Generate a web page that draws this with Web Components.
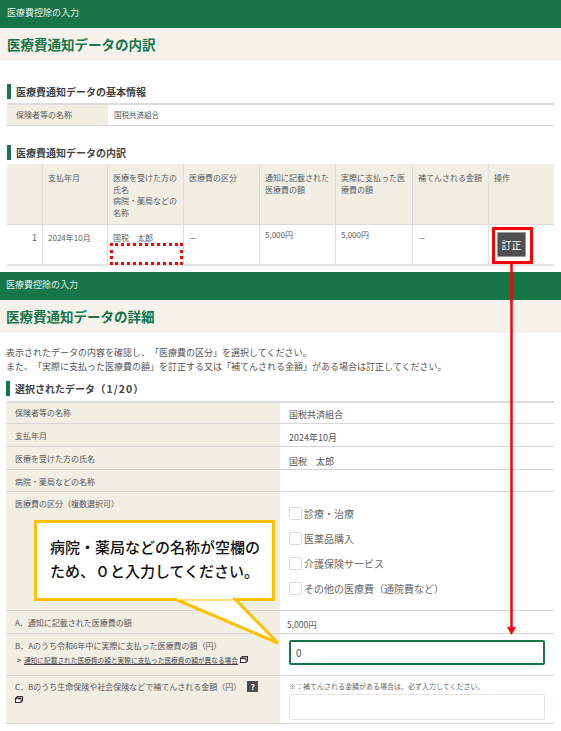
<!DOCTYPE html>
<html lang="ja">
<head>
<meta charset="UTF-8">
<title>医療費通知データ</title>
<style>
  html, body { margin: 0; background: #fff; }
  body { font-family: "Noto Sans CJK JP", "Noto Sans", sans-serif; color: #555; text-spacing-trim: space-all; }
</style>
</head>
<body>

<template id="page-band-template">
  <style>
    :host { display: block; }
    .bar { height: 28px; background: #17754a; color: #e4efe9; font-size: 9px; line-height: 26px; padding-left: var(--inset, 7px); }
    .title { height: 33px; background: #f5f2ec; color: #17754a; font-size: 13.5px; font-weight: 700; line-height: 32px; padding-left: var(--inset, 7px); }
  </style>
  <div class="bar"><slot name="bar"></slot></div>
  <div class="title"><slot name="title"></slot></div>
</template>

<template id="section-head-template">
  <style>
    :host { display: block; border-left: 4px solid #17754a; height: 15px; padding-left: 5px; font-size: 10px; font-weight: 700; line-height: 15px; color: #444; }
  </style>
  <slot></slot>
</template>

<template id="info-row-template">
  <style>
    :host { display: grid; grid-template-columns: var(--label, 274px) 1fr; border-bottom: 1px solid #d6d6d6; min-height: var(--h, 22px); }
    :host([first]) { border-top: 2px solid #dcdcdc; }
    .label { background: #f1eee4; font-size: 8px; padding: var(--label-top, 5px) 0 0 9px; line-height: 13px; color: #555; }
    .value { font-size: var(--value-size, 9px); padding: var(--value-pad, 6px 0 0 9px); line-height: 13px; color: #555; }
  </style>
  <div class="label"><slot name="label"></slot></div>
  <div class="value"><slot></slot></div>
</template>

<template id="list-table-template">
  <style>
    :host { display: block; margin-left: 7px; width: 547px; }
    .row { display: grid; grid-template-columns: 36px 65px 76px 76px 76px 77px 76px 65px; }
    .head { background: #f1eee4; height: 61px; border-bottom: 1px solid #dedbd2; box-sizing: border-box; }
    .body { height: 41px; border-bottom: 2px solid #e4e4e4; box-sizing: border-box; }
    .row > div { border-right: 1px solid #dedede; font-size: 8px; line-height: 11.7px; padding: 8px 0 0 5px; color: #5a5a5a; box-sizing: border-box; }
    .row > div:last-child { border-right: 0; }
    .body > div { padding-top: 7px; }
    .body > .amount { padding-top: 4px; }
    .num { text-align: right; padding-right: 5px !important; font-size: 9px !important; }
    button { display: block; margin: 0 0 0 6px; width: 29px; height: 25px; padding: 0; border: 1px solid #999; background: #505050; color: #fff; font: 10px/20px "Noto Sans CJK JP", sans-serif; }
  </style>
  <div class="row head">
    <div></div>
    <div>支払年月</div>
    <div>医療を受けた方の氏名<br>病院・薬局などの名称</div>
    <div>医療費の区分</div>
    <div>通知に記載された医療費の額</div>
    <div>実際に支払った医療費の額</div>
    <div>補てんされる金額</div>
    <div>操作</div>
  </div>
  <div class="row body">
    <div class="num">1</div>
    <div>2024年10月</div>
    <div>国税　太郎</div>
    <div>－</div>
    <div class="amount">5,000円</div>
    <div class="amount">5,000円</div>
    <div>－</div>
    <div style="padding-left:2px"><button>訂正</button></div>
  </div>
</template>

<template id="check-item-template">
  <style>
    :host { display: flex; align-items: center; gap: 2px; height: 25px; font-size: 10px; color: #666; }
    i { width: 11px; height: 11px; border: 1px solid #dedbd4; border-radius: 2px; background: #fff; }
  </style>
  <i></i><slot></slot>
</template>

<template id="link-icon-template">
  <style>
    :host { display: inline-block; width: 8px; height: 7px; vertical-align: 0; }
    svg { display: block; }
  </style>
  <svg width="8" height="7" viewBox="0 0 8 7"><rect x="2" y=".5" width="5.5" height="4.5" fill="#fff" stroke="#333"/><rect x=".5" y="2" width="5.5" height="4.5" fill="#fff" stroke="#333"/><rect x="1" y="2" width="5" height="1.2" fill="#333"/></svg>
</template>

<template id="amount-field-template">
  <style>
    :host { display: block; box-sizing: border-box; width: 256px; height: 26px; border: 1px solid #e8e4dc; border-radius: 2px; background: #fff; font-size: 10px; line-height: 24px; padding-left: 5px; color: #555; }
    :host([active]) { border: 2px solid #17754a; height: 25px; line-height: 21px; }
  </style>
  <slot></slot>
</template>

<template id="call-out-template">
  <style>
    :host { position: absolute; left: 34px; top: 520px; width: 241px; height: 81px; box-sizing: border-box; border: 3px solid #ffc000; background: #fff; padding: 12px 0 0 13px; font-size: 15px; font-weight: 500; line-height: 24px; color: #111; letter-spacing: 0; }
    svg { position: absolute; left: -37px; top: -523px; overflow: visible; pointer-events: none; }
    .txt { position: relative; white-space: nowrap; }
  </style>
  <svg width="561" height="731"><polygon points="175,599 278,643 235,599" fill="#fff" stroke="#ffc000" stroke-width="3"/><rect x="177" y="596" width="56" height="3.5" fill="#fff"/></svg>
  <div class="txt"><slot></slot></div>
</template>

<template id="red-marks-template">
  <style>
    :host { position: absolute; inset: 0; pointer-events: none; display: block; }
    .dots { position: absolute; left: 110px; top: 243px; width: 73px; height: 22px; box-sizing: border-box; border: 3px dotted #f00; }
    .box { position: absolute; left: 492px; top: 227px; width: 41px; height: 37px; box-sizing: border-box; border: 3px solid #f00; }
    svg { position: absolute; left: 0; top: 0; }
  </style>
  <div class="dots"></div>
  <div class="box"></div>
  <svg width="561" height="731"><line x1="511.5" y1="264" x2="511.5" y2="628" stroke="#f00" stroke-width="2.5"/><polygon points="507,627 516,627 511.5,635" fill="#f00"/></svg>
</template>

<style>
  .sheet { position: relative; width: 561px; height: 731px; overflow: hidden; }
  .first { height: 272px; }
  .wrap { margin: 0 7px; }
  .wrap2 { margin: 0 7px 0 6px; }
  .para { font-size: 9px; line-height: 14px; color: #555; margin: 13px 0 0 6px; height: 35px; }
  .sub { display: block; font-size: 8px; line-height: 14px; margin-top: 1px; white-space: nowrap; color: #444; }
  .sub b { display: inline-block; width: 7px; margin-left: 2px; font-size: 7px; }
  .sub u { font-size: 6.7px; text-underline-offset: 1px; }
  .q { display: inline-block; width: 11px; height: 11px; background: #4d4d4d; color: #fff; font-size: 8px; font-weight: 700; line-height: 11px; text-align: center; margin-left: 6px; vertical-align: 0; }
  .note { font-size: 7px; line-height: 10px; color: #666; margin: 0 0 3px; }
  .wide { letter-spacing: 1px; font-size: 10.5px; }
</style>

<div class="sheet">
  <div class="first">
    <page-band>
      <span slot="bar">医療費控除の入力</span>
      <span slot="title">医療費通知データの内訳</span>
    </page-band>
    <div class="wrap" style="margin-top:23px">
      <section-head>医療費通知データの基本情報</section-head>
      <info-row first style="--label:101px;--h:20px;--label-top:3px;--value-size:7.5px;--value-pad:3px 0 0 6px;margin-top:4px">
        <span slot="label">保険者等の名称</span>国税共済組合
      </info-row>
    </div>
    <div class="wrap" style="margin-top:19px"><section-head>医療費通知データの内訳</section-head></div>
    <list-table style="margin-top:4px"></list-table>
  </div>

  <page-band style="--inset:6px">
    <span slot="bar">医療費控除の入力</span>
    <span slot="title">医療費通知データの詳細</span>
  </page-band>
  <div class="para">表示されたデータの内容を確認し、「医療費の区分」を選択してください。<br>また、「実際に支払った医療費の額」を訂正する又は「補てんされる金額」がある場合は訂正してください。</div>
  <div class="wrap2">
    <section-head>選択されたデータ<span class="wide">（1/20）</span></section-head>
    <info-row first style="margin-top:5px;--h:20px;--label-top:3px;--value-pad:5px 0 0 9px"><span slot="label">保険者等の名称</span>国税共済組合</info-row>
    <info-row style="--h:22px;--value-pad:7px 0 0 9px"><span slot="label">支払年月</span>2024年10月</info-row>
    <info-row style="--h:22px;--value-pad:8px 0 0 9px"><span slot="label">医療を受けた方の氏名</span>国税　太郎</info-row>
    <info-row style="--h:21px"><span slot="label">病院・薬局などの名称</span></info-row>
    <info-row style="--h:118px;--value-pad:9px 0 0 9px">
      <span slot="label">医療費の区分（複数選択可）</span>
      <check-item>診療・治療</check-item>
      <check-item>医薬品購入</check-item>
      <check-item>介護保険サービス</check-item>
      <check-item>その他の医療費（通院費など）</check-item>
    </info-row>
    <info-row style="--h:22px;--value-size:8.5px;--value-pad:7px 0 0 7px"><span slot="label">A．通知に記載された医療費の額</span>5,000円</info-row>
    <info-row style="--h:41px;--value-pad:6px 0 0 9px">
      <span slot="label">B．Aのうち令和6年中に実際に支払った医療費の額（円）<span class="sub"><b>&gt;</b><u>通知に記載された医療費の額と実際に支払った医療費の額が異なる場合</u> <link-icon></link-icon></span></span>
      <amount-field active>0</amount-field>
    </info-row>
    <info-row style="--h:47px;--label-top:4px;--value-pad:5px 0 0 9px">
      <span slot="label">C．Bのうち生命保険や社会保険などで補てんされる金額（円）<span class="q">?</span><br><link-icon></link-icon></span>
      <div class="note">※：補てんされる金額がある場合は、必ず入力してください。</div>
      <amount-field></amount-field>
    </info-row>
  </div>

  <red-marks></red-marks>
  <call-out>病院・薬局などの名称が空欄の<br>ため、０と入力してください。</call-out>
</div>

<script>
  // each element just clones its template into an open shadow root
  function register(tag) {
    customElements.define(tag, class extends HTMLElement {
      constructor() {
        super();
        this.attachShadow({mode: 'open'});
        const template = document.getElementById(tag + '-template');
        this.shadowRoot.appendChild(template.content.cloneNode(true));
      }
    });
  }
  ['page-band', 'section-head', 'info-row', 'list-table', 'check-item', 'link-icon', 'amount-field', 'call-out', 'red-marks'].forEach(register);
</script>
</body>
</html>
